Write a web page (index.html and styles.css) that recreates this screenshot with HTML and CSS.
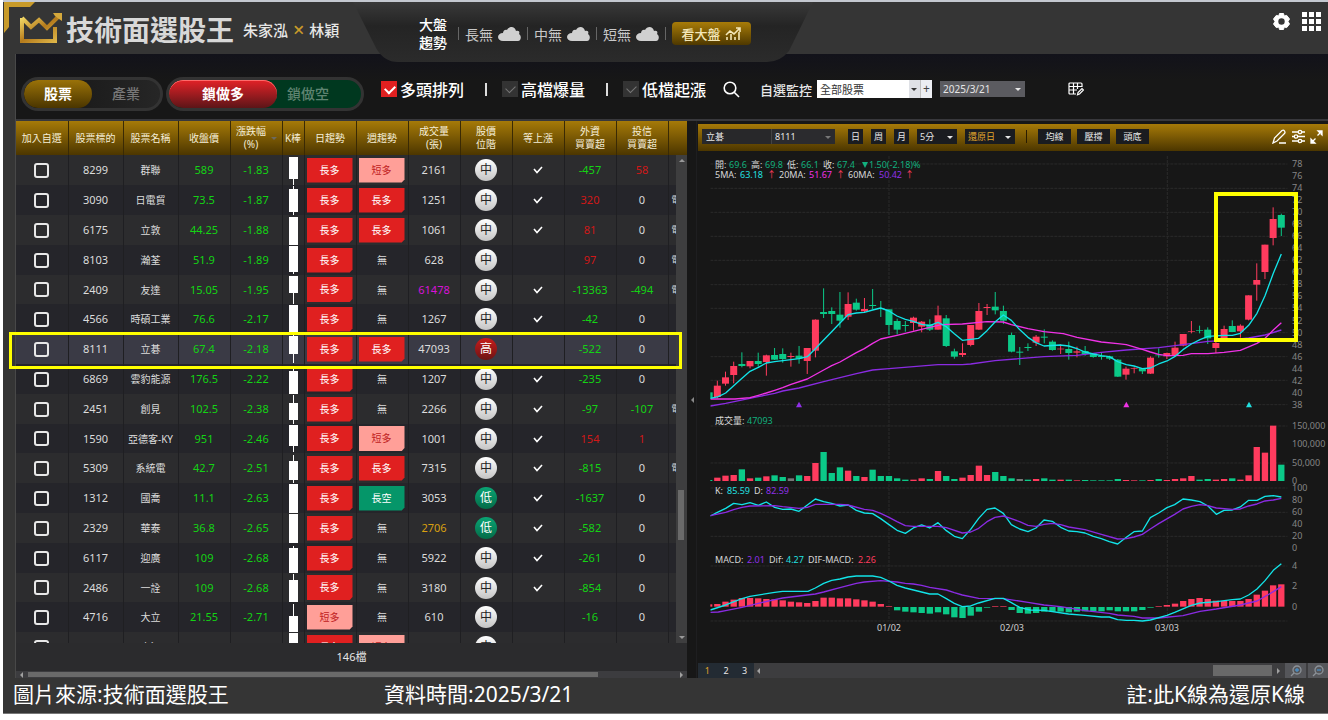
FILE: index.html
```html
<!DOCTYPE html>
<html lang="zh-Hant">
<head>
    <meta charset="utf-8">
    <title>技術面選股王</title>
    <link rel="stylesheet" href="styles.css">
</head>
<body>
    <div class="app">
        <svg class="corner" width="31" height="31" viewBox="0 0 31 31">
            <path d="M0 0H31L26 5H5V25L0 31Z" fill="#c99b2a"/>
        </svg>

        <header class="header">
            <svg class="logo" width="42" height="31" viewBox="0 0 42 31">
                <defs>
                    <linearGradient id="gold" x1="0" y1="0" x2="1" y2="1">
                        <stop offset="0" stop-color="#f6de6a"/>
                        <stop offset="0.5" stop-color="#b57b1c"/>
                        <stop offset="1" stop-color="#e0b84a"/>
                    </linearGradient>
                </defs>
                <path d="M2 5V28H35V14M2 5L11 14L19 7L27 15L39 3" fill="none" stroke="url(#gold)" stroke-width="4"/>
                <path d="M33 0H42V8L39 6L35 3Z" fill="#d6a93c"/>
            </svg>
            <h1>技術面選股王</h1>
            <p class="authors">朱家泓 <span>×</span> 林穎</p>

            <div class="market">
                <strong>大盤<br>趨勢</strong>
                <i></i>
                <span class="trend">長無 <svg width="23" height="14" viewBox="0 0 23 14"><path d="M5 14C2 14 0 12 0 10S2 6 5 6C5 3 8 2 9 3C11-1 17-1 18 4C21 3 22 5 21 7C24 9 23 14 20 14Z"/></svg></span>
                <i></i>
                <span class="trend">中無 <svg width="23" height="14" viewBox="0 0 23 14"><path d="M5 14C2 14 0 12 0 10S2 6 5 6C5 3 8 2 9 3C11-1 17-1 18 4C21 3 22 5 21 7C24 9 23 14 20 14Z"/></svg></span>
                <i></i>
                <span class="trend">短無 <svg width="23" height="14" viewBox="0 0 23 14"><path d="M5 14C2 14 0 12 0 10S2 6 5 6C5 3 8 2 9 3C11-1 17-1 18 4C21 3 22 5 21 7C24 9 23 14 20 14Z"/></svg></span>
                <i></i>
                <button class="market-btn">看大盤
                    <svg width="17" height="13" viewBox="0 0 17 13" fill="none" stroke="#f3e6b8" stroke-width="1.6"><path d="M1 8L5 4L9 7L15 1M11 1H15V5M2 13V10M6 13V7M10 13V10M14 13V5"/></svg>
                </button>
            </div>

            <div class="tools">
                <button aria-label="設定">
                    <svg width="17" height="17" viewBox="0 0 17 17"><path d="M6.5 0.5H10.5L11.2 3L13.7 2.4L16.5 6L15 8.5L16.5 11L13.7 14.6L11.2 14L10.5 16.5H6.5L5.8 14L3.3 14.6L0.5 11L2 8.5L0.5 6L3.3 2.4L5.8 3Z" fill="#fff" stroke="#fff" stroke-linejoin="round"/><circle cx="8.5" cy="8.5" r="3.2" fill="#363636"/></svg>
                </button>
                <button aria-label="選單">
                    <svg width="21" height="21" viewBox="0 0 21 21" fill="#fff"><path d="M1 1h5v5H1zM8 1h5v5H8zM15 1h5v5h-5zM1 8h5v5H1zM8 8h5v5H8zM15 8h5v5h-5zM1 15h5v5H1zM8 15h5v5H8zM15 15h5v5h-5z"/></svg>
                </button>
            </div>
        </header>

        <main class="content">
            <div class="controls">
                <div class="pill pill-type">
                    <button class="active">股票</button>
                    <button>產業</button>
                </div>
                <div class="pill pill-side">
                    <button class="active">鎖做多</button>
                    <button>鎖做空</button>
                </div>
                <div class="filters">
                    <label class="check"><input type="checkbox" checked>多頭排列</label>
                    <i></i>
                    <label class="check"><input type="checkbox">高檔爆量</label>
                    <i></i>
                    <label class="check"><input type="checkbox">低檔起漲</label>
                    <button class="search" aria-label="搜尋">
                        <svg width="17" height="17" viewBox="0 0 17 17" fill="none" stroke="#fff" stroke-width="1.6"><circle cx="7" cy="7" r="5.8"/><path d="M11.2 11.2L16 16"/></svg>
                    </button>
                    <label class="watch-label" for="watch">自選監控</label>
                    <span class="select watch">
                        <select id="watch"><option>全部股票</option></select>
                    </span>
                    <button class="plus" aria-label="新增">+</button>
                    <span class="select date">
                        <select aria-label="日期"><option>2025/3/21</option></select>
                    </span>
                    <button class="edit-table" aria-label="編輯欄位">
                        <svg width="16" height="14" viewBox="0 0 16 14" fill="none" stroke="#fff" stroke-width="1.2"><path d="M8 12H2Q1 12 1 11V2Q1 1 2 1H13Q14 1 14 2V5M1 4.500H14M1 8H9M5.500 1V12M9.500 1V7"/><path d="M9.500 12.800L10 10.500L14 6.500L15.500 8L11.500 12Z"/></svg>
                    </button>
                </div>
            </div>

            <div class="panels">
                <section class="list">
                    <div class="list-body">
                        <table>
                            <colgroup>
                                <col class="w52"><col class="w55"><col class="w55"><col class="w52"><col class="w52"><col class="w22"><col class="w52"><col class="w52"><col class="w52"><col class="w52"><col class="w52"><col class="w52"><col class="w52"><col class="w19">
                            </colgroup>
                            <thead>
                                <tr>
                                    <th>加入自選</th>
                                    <th>股票標的</th>
                                    <th>股票名稱</th>
                                    <th>收盤價</th>
                                    <th class="sorted">漲跌幅<br>(%)</th>
                                    <th>K棒</th>
                                    <th>日趨勢</th>
                                    <th>週趨勢</th>
                                    <th>成交量<br>(張)</th>
                                    <th>股價<br>位階</th>
                                    <th>等上漲</th>
                                    <th>外資<br>買賣超</th>
                                    <th>投信<br>買賣超</th>
                                    <th></th>
                                </tr>
                            </thead>
                            <tbody id="rows"></tbody>
                        </table>
                        <div class="vscroll"><span></span></div>
                    </div>
                    <div class="total">146檔</div>
                    <div class="hscroll"><span></span></div>
                    <div class="row-mark"></div>
                </section>

                <div class="splitter"><span></span></div>

                <section class="chart">
                    <div class="toolbar">
                        <input class="name" type="text" value="立碁" aria-label="股票名稱">
                        <span class="select code"><select aria-label="股票代號"><option>8111</option></select></span>
                        <button class="period">日</button>
                        <button class="period">周</button>
                        <button class="period">月</button>
                        <span class="select minute"><select aria-label="分鐘"><option>5分</option></select></span>
                        <span class="select adjusted"><select aria-label="還原"><option>還原日</option></select></span>
                        <i></i>
                        <button class="line-btn">均線</button>
                        <button class="line-btn">壓撐</button>
                        <button class="line-btn">頭底</button>
                        <div class="toolbar-icons">
                            <svg width="15" height="15" viewBox="0 0 15 15" fill="none" stroke="#fff" stroke-width="1.300"><path d="M1 14L2.500 9L10 1.500Q11.500 0.500 12.500 2T12.500 4.500L5 12ZM7 14H14"/></svg>
                            <svg width="13" height="15" viewBox="0 0 13 15" fill="none" stroke="#fff" stroke-width="1.300"><path d="M0 3H6M10 3H13M0 7.500H2M6 7.500H13M0 12H6M10 12H13"/><circle cx="8" cy="3" r="1.700"/><circle cx="4" cy="7.500" r="1.700"/><circle cx="8" cy="12" r="1.700"/></svg>
                            <svg width="13" height="14" viewBox="0 0 13 14" fill="#fff" stroke="#fff" stroke-width="1.300"><path d="M8 1H12V5ZM1 9V13H5ZM11 2L7.500 5.500M2 12L5.500 8.500"/></svg>
                        </div>
                    </div>
                    <svg class="plot" id="plot" viewBox="698 156 630 507">
                        <defs><clipPath id="plotArea"><rect x="46" y="90" width="1732" height="1450"/></clipPath></defs>
                        <!-- shapes are drawn on a grid three times as fine as the text -->
                        <g id="shapes" clip-path="url(#plotArea)" transform="translate(695 120) scale(0.33333)"></g>
                        <g id="axis" class="axis"></g>
                        <g class="legend">
                            <text y="168"><tspan x="715">開:</tspan><tspan x="729" class="g">69.6</tspan><tspan x="751">高:</tspan><tspan x="765" class="g">69.8</tspan><tspan x="787">低:</tspan><tspan x="801" class="g">66.1</tspan><tspan x="823">收:</tspan><tspan x="837" class="g">67.4</tspan><tspan x="869" class="g">1.50(-2.18)%</tspan></text>
                            <path d="M862 162H868L865 168Z" class="g"/>
                            <text y="178"><tspan x="715">5MA:</tspan><tspan x="740" class="c">63.18</tspan><tspan x="767" class="r">↑</tspan><tspan x="779">20MA:</tspan><tspan x="809" class="m">51.67</tspan><tspan x="836" class="r">↑</tspan><tspan x="848">60MA:</tspan><tspan x="879" class="p">50.42</tspan><tspan x="905" class="r">↑</tspan></text>
                            <text y="424"><tspan x="715">成交量:</tspan><tspan x="747" class="g">47093</tspan></text>
                            <text y="494"><tspan x="715">K:</tspan><tspan x="727" class="c">85.59</tspan><tspan x="754">D:</tspan><tspan x="766" class="p">82.59</tspan></text>
                            <text y="563"><tspan x="715">MACD:</tspan><tspan x="747" class="p">2.01</tspan><tspan x="769">Dif:</tspan><tspan x="786" class="c">4.27</tspan><tspan x="808">DIF-MACD:</tspan><tspan x="858" class="r">2.26</tspan></text>
                        </g>
                        <rect class="mark" x="1216" y="194" width="80" height="146"/>
                    </svg>
                    <div class="pager">
                        <div class="pages"><button class="on">1</button><button>2</button><button>3</button></div>
                        <div class="track"><span></span></div>
                        <button class="zoom" aria-label="放大"><svg width="12" height="12" viewBox="0 0 12 12" fill="none" stroke="#8c9298" stroke-width="1.300"><circle cx="7" cy="5" r="4"/><path d="M4 8L1 11"/><path d="M5 5H9M7 3V7" stroke="#4b8fc4"/></svg></button>
                        <button class="zoom" aria-label="縮小"><svg width="12" height="12" viewBox="0 0 12 12" fill="none" stroke="#8c9298" stroke-width="1.300"><circle cx="7" cy="5" r="4"/><path d="M4 8L1 11"/><path d="M5 5H9" stroke="#4b8fc4"/></svg></button>
                    </div>
                </section>
            </div>
        </main>

        <footer class="footer">
            <p>圖片來源:技術面選股王</p>
            <p>資料時間:2025/3/21</p>
            <p>註:此K線為還原K線</p>
        </footer>
    </div>
    <script src="script.js"></script>
</body>
</html>
```
FILE: styles.css
```css
* {
    box-sizing: border-box;
}
body {
    margin: 0;
    background-color: #ffffff;
    font-family: "Noto Sans", "Noto Sans CJK TC", sans-serif;
    color: #e6e6e6;
}
button, input, select {
    font-family: inherit;
    color: inherit;
    border: none;
    border-radius: 0;
    margin: 0;
    padding: 0;
    background: none;
}
h1, p {
    margin: 0;
}
svg {
    display: block;
}
.app {
    position: relative;
    margin-left: 3px;
    border-top: 2px solid #c4c8d0;
    border-bottom: 1px solid #777777;
    background-color: #353535;
}
.corner {
    position: absolute;
    left: 1px;
    top: 0;
}

/* header */
.header {
    display: flex;
    height: 52px;
}
.logo {
    margin: 11px 0 0 17px;
}
.header h1 {
    width: 168px;
    margin-left: 4px;
    font-size: 28px;
    line-height: 56px;
    font-weight: 700;
    color: #d8d8d8;
    white-space: nowrap;
}
.authors {
    width: 119px;
    padding-left: 9px;
    font-size: 15px;
    line-height: 56px;
    font-weight: 500;
    white-space: nowrap;
}
.authors span {
    margin: 0 1px;
    color: #c99b2a;
    font-size: 20px;
    line-height: 20px;
    vertical-align: -1px;
}
.market {
    display: flex;
    align-items: center;
    gap: 6px;
    flex: none;
    width: 460px;
    height: 60px;
    padding: 3px 0 0 66px;
    background: linear-gradient(#393939, #242424 40%, #2b2b2b);
    clip-path: path("M0 0L23 46Q31 60 45 60L414 60Q427 60 436 49L460 0Z");
    position: relative;
    font-size: 14px;
}
.market strong {
    margin-right: 5px;
    line-height: 18px;
    font-weight: 500;
    color: #ffffff;
}
.market i {
    width: 1px;
    height: 13px;
    background-color: #666666;
}
.trend {
    display: flex;
    align-items: center;
    gap: 5px;
    width: 56px;
    color: #c8c8c8;
    white-space: nowrap;
}
.trend svg {
    flex: none;
    fill: #d0d0d0;
}
.market-btn {
    display: flex;
    align-items: center;
    justify-content: center;
    gap: 4px;
    width: 79px;
    height: 23px;
    border-radius: 4px;
    background: linear-gradient(#a87c08, #4e3800);
    color: #f3e6b8;
    font-size: 13px;
    font-weight: 500;
}
.tools {
    display: flex;
    gap: 11px;
    margin: 8px 6px 0 auto;
    align-items: center;
    height: 22px;
}

/* filter bar */
.content {
    margin-left: 12px;
    background-color: #171717;
    border-left: 1px solid #484848;
}
.controls {
    display: flex;
    height: 67px;
    padding-left: 5px;
    background: linear-gradient(#12121a, #171717 40%);
    border-bottom: 2px solid #38383c;
}
.pill {
    display: flex;
    height: 34px;
    margin: 23px 3px 0 0;
    border: 3px solid #333333;
    border-radius: 17px;
    overflow: hidden;
}
.pill button {
    flex: 1;
    padding-bottom: 2px;
    font-size: 14px;
    font-weight: 500;
    color: #777777;
}
.pill .active {
    border-radius: 14px;
    font-weight: 700;
    color: #ffffff;
}
.pill-type {
    width: 142px;
    background: linear-gradient(90deg, #141414, #262626);
}
.pill-type .active {
    background: linear-gradient(#9a7208, #4a3500);
}
.pill-side {
    width: 198px;
    background-color: #00381f;
}
.pill-side .active {
    flex: none;
    width: 108px;
    background: linear-gradient(#e32227, #5c1518);
    box-shadow: inset 0 1px 0 #ff6a6a;
}
.pill-side button:last-child {
    padding-right: 22px;
    color: #5f8471;
}
.filters {
    display: flex;
    align-items: center;
    height: 20px;
    margin: 25px 0 0 14px;
    white-space: nowrap;
}
.filters i {
    width: 2px;
    height: 13px;
    margin: 0 15px 0 21px;
    background-color: #dddddd;
}
.check {
    display: flex;
    align-items: center;
    gap: 3px;
    font-size: 16px;
    font-weight: 500;
    color: #ffffff;
}
.check input {
    appearance: none;
    position: relative;
    width: 16px;
    height: 16px;
    background-color: #333333;
}
.check input::after {
    content: "";
    position: absolute;
    left: 4px;
    top: 4px;
    width: 8px;
    height: 5px;
    border-left: 1px solid #777777;
    border-bottom: 1px solid #777777;
    transform: rotate(-45deg);
}
.check input:checked {
    background-color: #e02020;
}
.check input:checked::after {
    border-color: #ffffff;
    border-width: 0 0 2px 2px;
}
.search {
    margin: 0 20px 0 17px;
}
.watch-label {
    width: 57px;
    font-size: 13px;
    font-weight: 500;
}
.select {
    position: relative;
    display: inline-block;
}
.select select {
    appearance: none;
    display: block;
    width: 100%;
    height: 100%;
    padding-left: 3px;
}
.select::after {
    content: "";
    position: absolute;
    right: 4px;
    top: 50%;
    margin-top: -1px;
    border: 3px solid transparent;
    border-top-color: currentColor;
    border-bottom: none;
    pointer-events: none;
}
.watch {
    width: 103px;
    height: 18px;
    background: linear-gradient(90deg, #ffffff 92px, #dfe1e6 92px);
    color: #333333;
}
.watch select {
    font-size: 11px;
}
.watch::after {
    right: 3px;
}
.plus {
    width: 12px;
    height: 18px;
    margin-right: 8px;
    background-color: #eceef2;
    border-left: 1px solid #c0c0c0;
    color: #444444;
    font-size: 12px;
    line-height: 16px;
}
.date {
    width: 85px;
    height: 16px;
    margin-right: 43px;
    background-color: #5b5b60;
}
.date select {
    font-size: 10px;
}

/* stock list */
.panels {
    display: grid;
    grid-template-columns: minmax(0, 671fr) 10px minmax(0, 631fr);
}
.list {
    position: relative;
    background-color: #2b2b2d;
}
.list-body {
    position: relative;
    height: 522px;
    overflow: hidden;
}
table {
    width: 100%;
    table-layout: fixed;
    border-collapse: collapse;
}
.w19 { width: 19px; }
.w22 { width: 22px; }
.w52 { width: 52px; }
.w55 { width: 55px; }
thead tr {
    height: 34px;
    background: linear-gradient(#a67a08, #4c3600);
}
th {
    position: relative;
    padding: 0;
    border-right: 1px solid #3a2a04;
    font-size: 10px;
    line-height: 13px;
    font-weight: 400;
    color: #f5eed8;
    white-space: nowrap;
}
.sorted {
    padding-right: 10px;
}
.sorted::after {
    content: "";
    position: absolute;
    right: 5px;
    top: 16px;
    border: 3px solid transparent;
    border-top-color: #6d6a5e;
    border-bottom: none;
}
tbody tr {
    height: 30px;
    background-color: #2c2c2e;
}
tbody tr:nth-child(even) {
    background-color: #25252a;
}
tbody tr:nth-child(5n) {
    height: 29px;
}
tbody tr.selected {
    background-color: #3a3a45;
}
td {
    padding: 0;
    border-right: 1px solid #1f1f22;
    font-size: 11px;
    line-height: 16px;
    text-align: center;
    white-space: nowrap;
    overflow: hidden;
    color: #dcdcdc;
}
td.name {
    font-size: 10px;
}
td.down {
    color: #14d314;
}
td.up {
    color: #d01818;
}
td.hot {
    color: #d812d8;
}
td.warm {
    color: #d8a010;
}
td input {
    appearance: none;
    display: block;
    width: 15px;
    height: 15px;
    margin: auto;
    border: 2px solid #e8e8e8;
    border-radius: 3px;
}
td svg {
    margin: auto;
}
td.industry {
    padding-left: 3px;
    font-size: 9px;
    text-align: left;
    border: none;
}
.tag {
    display: block;
    height: 25px;
    margin: 0 3px 0 2px;
    clip-path: polygon(0 0, 100% 0, 100% 88%, 94% 100%, 0 100%);
    font-size: 10px;
    line-height: 25px;
    color: #ffffff;
}
.tag.long {
    background-color: #e02020;
}
.tag.short {
    background-color: #ff9f98;
    color: #c02020;
}
.tag.bear {
    background-color: #059669;
}
.none {
    font-size: 10px;
}
.level {
    display: block;
    width: 22px;
    height: 22px;
    margin: auto;
    border-radius: 50%;
    font-size: 12px;
    line-height: 22px;
    color: #ffffff;
}
.level.mid {
    background: linear-gradient(#ffffff, #c4c4c4);
    color: #222222;
}
.level.high {
    background: linear-gradient(#c81c1c, #6c1414);
}
.level.low {
    background: linear-gradient(#0aa574, #046b48);
}
.vscroll {
    position: absolute;
    right: 0;
    top: 34px;
    bottom: 0;
    width: 11px;
    background-color: #3e3e3f;
}
.vscroll::before, .vscroll::after {
    content: "";
    position: absolute;
    left: 3px;
    border: 3px solid transparent;
}
.vscroll::before {
    top: 4px;
    border-bottom-color: #999999;
    border-top: none;
}
.vscroll::after {
    bottom: 4px;
    border-top-color: #999999;
    border-bottom: none;
}
.vscroll span {
    position: absolute;
    left: 2px;
    top: 335px;
    width: 6px;
    height: 50px;
    background-color: #6a6a6a;
}
.total {
    height: 28px;
    font-size: 11px;
    line-height: 27px;
    text-align: center;
}
.hscroll {
    display: flex;
    align-items: center;
    justify-content: space-between;
    height: 7px;
    padding: 0 4px;
    background-color: #3c3c3f;
}
.hscroll::before, .hscroll::after, .track::before, .track::after {
    content: "";
    border: 3px solid transparent;
}
.hscroll::before, .track::before {
    border-right-color: #a0a0a0;
    border-left: none;
}
.hscroll::after, .track::after {
    border-left-color: #a0a0a0;
    border-right: none;
}
.hscroll span {
    width: 86%;
    height: 5px;
    margin: 0 auto 0 5px;
    background-color: #6a6a6a;
}
.row-mark {
    position: absolute;
    left: -7px;
    right: 5px;
    top: 211px;
    height: 37px;
    border: 3px solid #ffff00;
}
.splitter {
    display: flex;
    align-items: center;
    justify-content: center;
}
.splitter span {
    border: 3px solid transparent;
    border-right-color: #888888;
    border-left: none;
}

/* chart */
.chart {
    padding: 3px 0 0 1px;
    border-left: 1px solid #1e1e20;
    margin-left: -1px;
}
.toolbar {
    display: flex;
    align-items: center;
    height: 27px;
    margin-bottom: 5px;
    padding: 0 5px 2px 4px;
    background: linear-gradient(#a67a08, #4c3600);
    font-size: 9px;
}
.toolbar button, .toolbar select, .toolbar input {
    font-size: 9px;
}
.toolbar i {
    width: 1px;
    height: 13px;
    margin: 0 11px 0 11px;
    background-color: #2a1c00;
}
.toolbar .name {
    width: 69px;
    height: 15px;
    padding-left: 4px;
    background-color: #28282a;
}
.toolbar .select, .period, .line-btn {
    height: 15px;
    background-color: #1a1c20;
}
.toolbar .code {
    width: 64px;
    margin-right: 13px;
    background-color: #2b2b2e;
    border-left: 1px solid #444444;
}
.code::after {
    border-top-color: #777777;
}
.toolbar .select.minute {
    width: 40px;
    margin-right: 8px;
}
.toolbar .select.adjusted {
    width: 50px;
}
.adjusted select {
    color: #e0a52c;
}
.period {
    width: 15px;
    margin-right: 8px;
}
.line-btn {
    width: 33px;
    margin-right: 6px;
}
.toolbar-icons {
    display: flex;
    align-items: center;
    gap: 5px;
    margin-left: auto;
}
.plot {
    width: 100%;
    height: auto;
}
.plot text {
    font-size: 9px;
}
.axis text {
    fill: #858585;
}
.axis .day {
    fill: #d0d0d0;
    text-anchor: middle;
}
.legend text {
    fill: #d8d8d8;
}
.grid {
    stroke: #2a2a2a;
    stroke-width: 3;
    stroke-dasharray: 9 3;
}
.line {
    fill: none;
    stroke-width: 4;
    stroke-linejoin: round;
}
.mark {
    fill: none;
    stroke: #ffff00;
    stroke-width: 4;
}
.plot .g {
    fill: #0bc988;
}
.legend .g {
    fill: #12b07e;
}
.plot .r {
    fill: #ff3b5e;
}
.plot .c {
    fill: #22e0e0;
}
.plot .m {
    fill: #f032e6;
}
.plot .p {
    fill: #9030e8;
}
.plot .n {
    fill: #777777;
}
.pager {
    display: flex;
    height: 15px;
    background-color: #3d3d3f;
}
.pages {
    display: flex;
    width: 56px;
    background-color: #232b33;
}
.pages button {
    flex: 1;
    font-size: 9px;
    line-height: 14px;
}
.pages .on {
    color: #e0a52c;
}
.track {
    display: flex;
    flex: 1;
    align-items: center;
    justify-content: space-between;
    padding: 0 5px 0 3px;
}
.track span {
    width: 59px;
    height: 11px;
    margin: 0 5px 0 auto;
    background-color: #696969;
}
.zoom {
    display: flex;
    align-items: center;
    justify-content: center;
    width: 21px;
    margin-right: 2px;
    background-color: #55565a;
}
.zoom:last-child {
    width: 20px;
    margin-right: 0;
}

/* captions */
.footer {
    display: grid;
    grid-template-columns: 371px 1fr auto;
    height: 35px;
    padding: 0 23px 0 10px;
    font-size: 21px;
    line-height: 33px;
    color: #ffffff;
}
```
FILE: script.js
```javascript
// code, name, price, change, day, week, volume, level, rising, foreign, trust, industry, [wick top, body top, body bottom, wick bottom]
var stocks = [
    ['8299', '群聯', '589', '-1.83', '長多', '短多', '2161', '中', 1, '-457', '58', '', [1, 1, 23, 29]],
    ['3090', '日電貿', '73.5', '-1.87', '長多', '長多', '1251', '中', 1, '320', '0', '電子', [0, 3, 26, 29]],
    ['6175', '立敦', '44.25', '-1.88', '長多', '長多', '1061', '中', 1, '81', '0', '電子', [1, 1, 29, 29]],
    ['8103', '瀚荃', '51.9', '-1.89', '長多', '無', '628', '中', 0, '97', '0', '電子', [0, 0, 26, 28]],
    ['2409', '友達', '15.05', '-1.95', '長多', '無', '61478', '中', 1, '-13363', '-494', '電子', [1, 1, 18, 29]],
    ['4566', '時碩工業', '76.6', '-2.17', '長多', '無', '1267', '中', 1, '-42', '0', '', [0, 0, 29, 29]],
    ['8111', '立碁', '67.4', '-2.18', '長多', '長多', '47093', '高', 0, '-522', '0', '', [0, 1, 19, 28]],
    ['6869', '雲豹能源', '176.5', '-2.22', '長多', '無', '1207', '中', 1, '-235', '0', '', [4, 6, 29, 29]],
    ['2451', '創見', '102.5', '-2.38', '長多', '無', '2266', '中', 1, '-97', '-107', '電子', [0, 8, 25, 29]],
    ['1590', '亞德客-KY', '951', '-2.46', '長多', '短多', '1001', '中', 1, '154', '1', '', [1, 1, 22, 28]],
    ['5309', '系統電', '42.7', '-2.51', '長多', '長多', '7315', '中', 1, '-815', '0', '電子', [1, 7, 26, 29]],
    ['1312', '國喬', '11.1', '-2.63', '長多', '長空', '3053', '低', 1, '-1637', '0', '', [0, 0, 29, 29]],
    ['2329', '華泰', '36.8', '-2.65', '長多', '無', '2706', '低', 1, '-582', '0', '', [0, 0, 29, 29]],
    ['6117', '迎廣', '109', '-2.68', '長多', '無', '5922', '中', 1, '-261', '0', '', [2, 4, 29, 29]],
    ['2486', '一詮', '109', '-2.68', '長多', '無', '3180', '中', 1, '-854', '0', '', [1, 7, 29, 29]],
    ['4716', '大立', '21.55', '-2.71', '短多', '無', '610', '中', 0, '-16', '0', '', [1, 13, 29, 29]],
    ['8436', '大江', '151.5', '-2.80', '長多', '短多', '2167', '中', 0, '160', '10', '', [0, 0, 29, 29]]
];
var tagClass = { '長多': 'long', '短多': 'short', '長空': 'bear' };
var levelClass = { '中': 'mid', '高': 'high', '低': 'low' };
var volumeClass = { '61478': 'hot', '2706': 'warm' };

function tag(t) {
    return tagClass[t] ? `<span class="tag ${tagClass[t]}">${t}</span>` : `<span class="none">${t}</span>`;
}
function sign(v) {
    return v === '0' ? '' : v[0] === '-' ? 'down' : 'up';
}

document.getElementById('rows').innerHTML = stocks.map(s => {
    var k = s[12];
    return `<tr class="${s[0] === '8111' ? 'selected' : ''}">
        <td><input type="checkbox" aria-label="加入自選 ${s[1]}"></td>
        <td>${s[0]}</td>
        <td class="name">${s[1]}</td>
        <td class="down">${s[2]}</td>
        <td class="down">${s[3]}</td>
        <td><svg width="9" height="29" fill="#fff"><rect x="4" y="${k[0]}" width="1" height="${k[3] - k[0]}"/><rect y="${k[1]}" width="9" height="${k[2] - k[1]}"/></svg></td>
        <td>${tag(s[4])}</td>
        <td>${tag(s[5])}</td>
        <td class="${volumeClass[s[6]] || ''}">${s[6]}</td>
        <td><span class="level ${levelClass[s[7]]}">${s[7]}</span></td>
        <td>${s[8] ? '<svg width="10" height="8" fill="none" stroke="#fff" stroke-width="1.6"><path d="M1 3L4 6.500L9 1"/></svg>' : ''}</td>
        <td class="${sign(s[9])}">${s[9]}</td>
        <td class="${sign(s[10])}">${s[10]}</td>
        <td class="industry">${s[11]}</td>
    </tr>`;
}).join('');

// one entry per day: colour, high, body top, body bottom, low
var candles = `g815,817,835,835 r782,797,831,835 r755,772,791,797 r725,738,765,790 g697,732,738,742 r723,723,739,745 g698,723,732,740
r704,706,726,767 g684,705,719,720 g685,702,717,728 r698,708,711,740 g678,707,716,731 r684,684,723,762 r598,599,692,712
g505,576,582,594 g562,573,582,612 g516,584,602,623 r517,552,590,600 g536,548,569,572 r534,567,574,577 g507,555,558,568
g543,565,567,591 g568,568,615,645 g596,603,629,643 g603,615,618,635 r590,593,609,632 r603,605,620,637 g598,613,629,633
r557,586,629,629 g585,595,678,681 g686,694,710,716 r670,699,705,711 r615,615,675,679 r549,573,629,630 r552,561,564,585
g516,560,571,583 g557,573,602,612 g638,645,695,697 g681,695,698,735 g670,681,684,693 r645,650,668,678 g628,650,653,670
g661,665,690,692 r673,686,688,702 g665,687,699,719 r680,694,698,712 g678,693,702,707 g699,700,711,713 g699,708,711,719
g707,709,716,720 g717,719,770,771 r740,746,764,779 r742,744,746,760 g744,745,754,762 r709,713,761,762 g685,704,706,713
r698,699,709,717 r665,683,707,709 r642,642,677,679 r603,633,635,640 g617,630,632,640 g622,629,655,672 r663,669,684,699
r617,627,655,657 g601,618,636,636 r613,617,634,653 r526,526,599,601 r430,480,494,542 r374,374,456,477 r262,297,354,376
g281,285,323,348`.split(/\s+/);

var volumes = `g3 r10 r16 r18 g35 r8 g10 r14 g17 g12 n8 g17 r15 r54 g87 g24 g41 r31 g15 r12 g34 g15 g15 g8 g4 r4 r8 g6
r30 g15 g6 r10 r18 r46 r18 g27 g15 g8 n6 g4 r6 g8 g4 r4 g4 r2 g3 g2 g2 g2 g6 r3 r2 g2 r3 g6 r3 r6 r8 r15 g4 g6 r4 r6 g8 r4
r17 r102 r85 r166 g49`.split(/\s+/);

var histogram = [7, 8, 15, 21, 26, 26, 25, 23, 22, 19, 15, 13, 11, 17, 27, 27, 25, 25, 22, 19, 15, 8, 2, -10, -14, -16, -18, -20,
    -16, -22, -31, -33, -26, -14, -2, 2, 2, -9, -18, -20, -18, -14, -14, -14, -16, -14, -13, -13, -13, -10, -13, -13, -13, -9, -2,
    2, 5, 9, 17, 23, 26, 23, 18, 17, 17, 17, 23, 36, 48, 64, 67];

// 60MA, 20MA, 5MA, K, D, MACD, Dif
var lines = [
    ['#8a2be2', '46,858 92,850 190,830 239,820 263,813 312,804 386,785 435,773 484,761 533,750 582,746 729,734 802,734 827,732 900,722 1047,710 1146,706 1219,697 1294,690 1391,683 1464,674 1539,664 1587,662 1661,654 1710,645 1759,630'],
    ['#f032e6', '46,837 120,837 165,833 190,826 214,819 239,811 263,803 288,793 337,777 386,750 410,737 435,726 484,698 508,686 533,670 557,657 606,646 655,634 704,622 740,614 802,612 876,605 925,606 949,614 999,626 1047,635 1105,641 1146,652 1219,666 1268,671 1294,674 1342,688 1366,696 1391,703 1416,707 1464,706 1489,701 1539,701 1587,697 1636,691 1686,670 1710,655 1735,630 1759,608'],
    ['#12e4e8', '46,835 70,830 92,819 116,797 141,775 165,754 190,742 214,729 239,725 288,719 312,716 337,710 361,686 386,660 410,635 435,609 459,584 484,579 508,577 533,570 557,564 582,573 606,588 631,598 655,604 680,613 704,617 729,607 754,620 778,641 802,661 827,658 851,655 876,632 900,606 925,585 949,601 973,628 999,652 1023,668 1047,678 1095,675 1121,678 1146,686 1170,696 1195,702 1219,707 1243,710 1268,725 1294,734 1317,738 1342,746 1366,744 1391,732 1416,723 1439,710 1464,689 1489,672 1515,659 1539,649 1587,646 1612,646 1636,640 1661,616 1686,580 1710,527 1735,460 1759,402'],
    ['#12e4e8', '46,1188 67,1177 92,1165 116,1150 141,1154 165,1148 190,1156 214,1146 239,1162 263,1168 288,1167 312,1174 337,1155 361,1137 386,1145 410,1150 435,1158 459,1155 484,1171 508,1179 533,1181 557,1196 582,1214 606,1231 631,1240 655,1224 680,1215 704,1224 729,1208 754,1232 778,1249 802,1256 827,1228 851,1195 876,1168 900,1164 925,1180 949,1214 974,1227 999,1235 1023,1224 1047,1200 1072,1204 1097,1222 1121,1233 1146,1235 1170,1239 1195,1249 1219,1256 1243,1265 1268,1272 1294,1252 1317,1235 1342,1233 1366,1193 1391,1179 1416,1163 1439,1154 1464,1137 1489,1140 1515,1145 1539,1158 1564,1183 1587,1171 1612,1170 1636,1161 1661,1141 1686,1141 1710,1129 1735,1127 1759,1131'],
    ['#8a2be2', '46,1187 92,1177 116,1169 141,1162 165,1158 239,1157 263,1160 312,1165 337,1162 361,1153 435,1153 459,1155 508,1168 533,1171 557,1180 582,1192 606,1205 631,1217 655,1219 729,1219 754,1223 802,1239 827,1236 851,1225 876,1205 900,1192 925,1188 949,1196 974,1205 999,1216 1023,1219 1047,1213 1072,1210 1097,1214 1121,1221 1170,1229 1219,1243 1268,1257 1294,1256 1317,1251 1342,1243 1366,1227 1391,1211 1439,1183 1464,1167 1489,1159 1515,1154 1539,1157 1564,1164 1612,1168 1636,1167 1661,1158 1686,1152 1710,1143 1735,1140 1759,1135'],
    ['#8a2be2', '46,1477 70,1476 92,1472 141,1462 190,1450 239,1439 263,1434 312,1428 361,1422 386,1416 435,1403 484,1390 508,1386 557,1382 606,1386 631,1390 655,1392 680,1396 704,1402 754,1410 778,1418 802,1425 851,1435 925,1436 999,1447 1047,1455 1097,1460 1170,1472 1243,1480 1268,1485 1317,1489 1342,1494 1391,1494 1464,1487 1515,1474 1564,1467 1636,1455 1661,1449 1686,1443 1735,1415 1759,1400'],
    ['#12e4e8', '46,1470 92,1455 141,1436 165,1429 239,1417 263,1414 339,1414 361,1404 386,1390 410,1381 435,1377 459,1371 484,1368 533,1368 557,1372 582,1383 606,1396 631,1404 704,1422 729,1422 754,1436 778,1450 802,1460 827,1458 851,1449 900,1435 925,1435 949,1448 974,1462 1005,1470 1047,1471 1121,1482 1170,1486 1219,1491 1243,1491 1268,1499 1294,1501 1317,1501 1342,1503 1366,1500 1416,1486 1439,1477 1489,1456 1515,1449 1564,1445 1612,1439 1636,1437 1661,1425 1686,1407 1710,1382 1735,1351 1759,1331']
];

function dayX(i) {
    return 42.5 + i * 24.52;
}
function rect(c, x, y, w, h) {
    return `<rect class="${c}" x="${x.toFixed(1)}" y="${y}" width="${w}" height="${h}"/>`;
}

var out = '';
[132, 205, 277, 349, 421, 494, 565, 638, 710, 781, 854, 918, 1029, 1104, 1177, 1249, 1338, 1503].forEach(y => {
    out += `<path class="grid" d="M46 ${y}H1778"/>`;
});
[582, 1417].forEach(x => {
    out += `<path class="grid" d="M${x} 108V1503"/>`;
});
candles.forEach((s, i) => {
    var c = s[0], v = s.slice(1).split(',').map(Number), x = dayX(i);
    out += rect(c, x - 1.5, v[0], 3, v[3] - v[0]) + rect(c, x - 10.5, v[1], 21, v[2] - v[1]);
});
volumes.forEach((s, i) => {
    var h = Number(s.slice(1));
    out += rect(s[0], dayX(i) - 9.5, 1083 - h, 19, h);
});
histogram.forEach((h, i) => {
    out += rect(h > 0 ? 'r' : 'g', dayX(i) - 9.5, h > 0 ? 1460 - h : 1461, 19, Math.abs(h));
});
lines.forEach(l => {
    out += `<polyline class="line" stroke="${l[0]}" points="${l[1]}"/>`;
});
[['p', 312], ['m', 1294], ['c', 1662]].forEach(t => {
    out += `<path class="${t[0]}" d="M${t[1] - 9} 862H${t[1] + 9}L${t[1]} 845Z"/>`;
});
document.getElementById('shapes').innerHTML = out;

var labels = [['150,000', 426], ['100,000', 444], ['50,000', 463], ['0', 481], ['100', 488], ['80', 500], ['60', 512], ['40', 524],
    ['20', 536], ['0', 548], ['4', 566], ['2', 586], ['0', 607]];
for (var p = 78; p >= 38; p -= 2) {
    labels.push([p, Math.round(164 + (78 - p) * 6.02)]);
}
document.getElementById('axis').innerHTML = labels.map(l => `<text x="1292" y="${l[1] + 3}">${l[0]}</text>`).join('') +
    [['01/02', 889], ['02/03', 1012], ['03/03', 1167]].map(d => `<text class="day" x="${d[1]}" y="631">${d[0]}</text>`).join('');
```
